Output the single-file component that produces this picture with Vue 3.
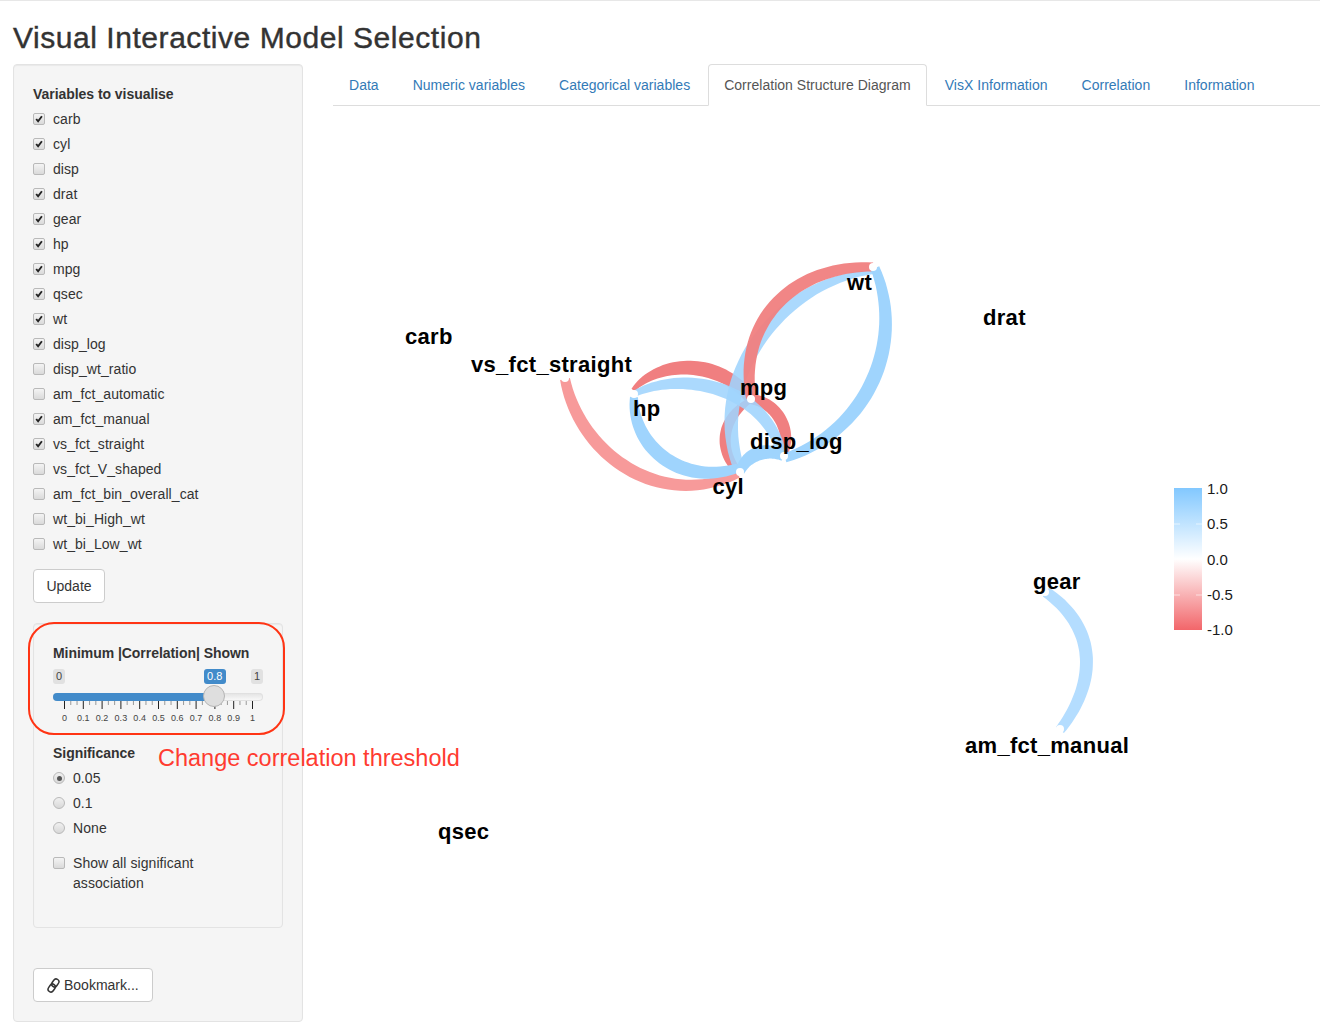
<template>
  <div class="page">
    <h2 class="title">Visual Interactive Model Selection</h2>
    <div class="row">
      <!-- sidebar -->
      <div class="well sidebar">
        <div class="group-label">Variables to visualise</div>
        <label v-for="v in variables" :key="v.name" class="check-row">
          <span class="box">
            <svg v-if="v.on" viewBox="0 0 12 12" width="12" height="12">
              <path d="M3.2 6l1.9 2.3 3.8-5" fill="none" stroke="#222" stroke-width="1.9" />
            </svg>
          </span>
          {{ v.name }}
        </label>
        <button class="btn update">Update</button>

        <div class="well inner">
          <div class="group-label">Minimum |Correlation| Shown</div>
          <div class="slider">
            <span class="tag tag-min">0</span>
            <span class="tag tag-val">0.8</span>
            <span class="tag tag-max">1</span>
            <div class="track"><div class="track-fill"></div></div>
            <svg class="ticks" width="210" height="30" viewBox="0 0 210 30">
              <line v-for="t in ticks" :key="t.x" :x1="t.x" :x2="t.x" y1="0" :y2="t.major ? 8 : 4" :stroke="t.major ? '#222' : '#999'" />
              <text v-for="(l, i) in tickLabels" :key="l" :x="11.5 + i * 18.8" y="20" class="tick-label">{{ l }}</text>
            </svg>
            <div class="handle"></div>
          </div>

          <div class="group-label">Significance</div>
          <label v-for="(r, i) in radios" :key="r" class="radio-row">
            <span class="dot" :class="{ on: i === 0 }"></span>
            {{ r }}
          </label>
          <label class="show-all">
            <span class="box"></span>
            <span>Show all significant association</span>
          </label>
        </div>

        <button class="btn bookmark">
          <svg viewBox="0 0 16 16" width="15" height="15">
            <g fill="none" stroke="#333" stroke-width="1.6" transform="rotate(-55 8 8)">
              <rect x="0.2" y="5" width="9" height="6" rx="3" />
              <rect x="6.8" y="5" width="9" height="6" rx="3" />
            </g>
          </svg>
          Bookmark...
        </button>
      </div>

      <!-- main panel -->
      <div class="main">
        <ul class="tabs">
          <li v-for="t in tabs" :key="t" class="tab" :class="{ active: t === activeTab }">{{ t }}</li>
        </ul>
        <svg class="plot" viewBox="333 106 987 921" width="987" height="921">
          <defs>
            <linearGradient id="legend" x1="0" y1="0" x2="0" y2="1">
              <stop offset="0" stop-color="#82c8ff" />
              <stop offset="0.5" stop-color="#ffffff" />
              <stop offset="1" stop-color="#f2666a" />
            </linearGradient>
          </defs>
          <path v-for="(e, i) in edges" :key="i" :d="ribbon(e)" :fill="e.color" :fill-opacity="e.alpha" />
          <circle v-for="n in nodes" :key="n[0] + '-' + n[1]" :cx="n[0]" :cy="n[1]" r="4" fill="#fff" />
          <text v-for="l in labels" :key="l.text" :x="l.x" :y="l.y" class="node-label">{{ l.text }}</text>
          <rect x="1174" y="488" width="28" height="142" fill="url(#legend)" />
          <g stroke="#fff" stroke-opacity="0.6">
            <line v-for="y in legendTicks" :key="'a' + y" x1="1174" x2="1180" :y1="y" :y2="y" />
            <line v-for="y in legendTicks" :key="'b' + y" x1="1196" x2="1202" :y1="y" :y2="y" />
          </g>
          <text v-for="l in legendLabels" :key="l.text" x="1207" :y="l.y" class="legend-label">{{ l.text }}</text>
        </svg>
      </div>
    </div>

    <!-- annotation drawn over the screenshot -->
    <div class="note-ring"></div>
    <div class="note-text">Change correlation threshold</div>
  </div>
</template>

<script setup>
const activeTab = 'Correlation Structure Diagram'
const tabs = ['Data', 'Numeric variables', 'Categorical variables', 'Correlation Structure Diagram', 'VisX Information', 'Correlation', 'Information']

const variables = [
  { name: 'carb', on: true }, { name: 'cyl', on: true }, { name: 'disp', on: false },
  { name: 'drat', on: true }, { name: 'gear', on: true }, { name: 'hp', on: true },
  { name: 'mpg', on: true }, { name: 'qsec', on: true }, { name: 'wt', on: true },
  { name: 'disp_log', on: true }, { name: 'disp_wt_ratio', on: false }, { name: 'am_fct_automatic', on: false },
  { name: 'am_fct_manual', on: true }, { name: 'vs_fct_straight', on: true }, { name: 'vs_fct_V_shaped', on: false },
  { name: 'am_fct_bin_overall_cat', on: false }, { name: 'wt_bi_High_wt', on: false }, { name: 'wt_bi_Low_wt', on: false }
]
const radios = ['0.05', '0.1', 'None']

const tickLabels = ['0', '0.1', '0.2', '0.3', '0.4', '0.5', '0.6', '0.7', '0.8', '0.9', '1']
const ticks = []
for (let i = 0; i <= 30; i++) {
  ticks.push({ x: 11.5 + i * 18.8 / 3, major: i % 3 === 0 })
}

const RED = '#f07f80'
const SALMON = '#f79a9a'
const BLUE = '#9fd4fd'
const PALE = '#b4ddff'

// each edge is a cubic bezier [p0, p1, p2, p3] with widths at start, middle and end
const edges = [
  { pts: [[565, 379], [580, 455], [660, 510], [738, 474]], w: [10, 13, 8], color: SALMON, alpha: 1 },
  { pts: [[751, 400], [725, 415], [715, 445], [738, 472]], w: [5, 11, 8], color: RED, alpha: 1 },
  { pts: [[633, 390], [660, 359], [720, 359], [750, 398]], w: [4, 14, 11], color: RED, alpha: 1 },
  { pts: [[751, 399], [780, 403], [792, 435], [783, 455]], w: [10, 12, 8], color: RED, alpha: 1 },
  { pts: [[634, 397], [632, 445], [680, 487], [738, 468]], w: [8, 14, 9], color: BLUE, alpha: 1 },
  { pts: [[873, 272], [780, 280], [705, 380], [740, 471]], w: [4, 14, 11], color: BLUE, alpha: 0.88 },
  { pts: [[634, 394], [680, 370], [765, 385], [782, 455]], w: [6, 13, 9], color: BLUE, alpha: 0.88 },
  { pts: [[751, 398], [738, 320], [795, 265], [873, 267]], w: [10, 13, 9], color: RED, alpha: 0.95 },
  { pts: [[875, 268], [905, 340], [870, 430], [785, 458]], w: [9, 14, 9], color: BLUE, alpha: 1 },
  { pts: [[740, 472], [747, 452], [770, 447], [784, 457]], w: [9, 14, 9], color: BLUE, alpha: 1 },
  { pts: [[1046, 592], [1100, 630], [1095, 685], [1060, 730]], w: [11, 13, 10], color: PALE, alpha: 1 }
]
const nodes = [[565, 378], [634, 394], [751, 399], [873, 267], [784, 456], [740, 472], [1045, 592], [1060, 729]]

const labels = [
  { text: 'carb', x: 405, y: 344 },
  { text: 'vs_fct_straight', x: 471, y: 372 },
  { text: 'wt', x: 847, y: 290 },
  { text: 'drat', x: 983, y: 325 },
  { text: 'mpg', x: 740, y: 395 },
  { text: 'hp', x: 633, y: 416 },
  { text: 'disp_log', x: 750, y: 449 },
  { text: 'cyl', x: 712.5, y: 494 },
  { text: 'gear', x: 1033, y: 589 },
  { text: 'am_fct_manual', x: 965, y: 753 },
  { text: 'qsec', x: 438, y: 839 }
]
const legendTicks = [524, 559, 595]
const legendLabels = [
  { text: '1.0', y: 494 }, { text: '0.5', y: 529 }, { text: '0.0', y: 565 },
  { text: '-0.5', y: 600 }, { text: '-1.0', y: 635 }
]

// samples the bezier and returns a closed ribbon whose width follows w
function ribbon({ pts, w }) {
  const [a, b, c, d] = pts
  const left = []
  const right = []
  for (let i = 0; i <= 40; i++) {
    const t = i / 40
    const u = 1 - t
    const pos = k => u * u * u * a[k] + 3 * u * u * t * b[k] + 3 * u * t * t * c[k] + t * t * t * d[k]
    const der = k => 3 * u * u * (b[k] - a[k]) + 6 * u * t * (c[k] - b[k]) + 3 * t * t * (d[k] - c[k])
    const len = Math.hypot(der(0), der(1)) || 1
    const half = (u * u * w[0] + 2 * u * t * (2 * w[1] - (w[0] + w[2]) / 2) + t * t * w[2]) / 2
    const nx = -der(1) / len
    const ny = der(0) / len
    left.push((pos(0) + nx * half).toFixed(1) + ' ' + (pos(1) + ny * half).toFixed(1))
    right.unshift((pos(0) - nx * half).toFixed(1) + ' ' + (pos(1) - ny * half).toFixed(1))
  }
  return 'M' + left.join('L') + 'L' + right.join('L') + 'Z'
}
</script>

<style>
html, body { background: #fff; }
</style>

<style scoped>
.page {
  position: relative;
  height: 1027px;
  overflow: hidden;
  box-sizing: border-box;
  border-top: 1px solid #e7e7e7;
  padding: 0 0 0 13px;
  font-family: "Liberation Sans", Arial, sans-serif;
  font-size: 14px;
  line-height: 20px;
  color: #333;
}
.title {
  margin: 20px 0 10px;
  font-size: 30px;
  line-height: 33px;
  font-weight: 400;
  letter-spacing: 0.55px;
  -webkit-text-stroke: 0.4px #333;
  color: #333;
}
.row { display: flex; gap: 30px; align-items: flex-start; }
.well {
  box-sizing: border-box;
  background: #f5f5f5;
  border: 1px solid #e3e3e3;
  border-radius: 4px;
  box-shadow: inset 0 1px 1px rgba(0, 0, 0, 0.05);
}
.sidebar {
  width: 290px;
  height: 958px;
  flex: none;
  padding: 19px;
  letter-spacing: 0.07px;
}
.group-label { font-weight: 700; margin-bottom: 5px; letter-spacing: -0.05px; }
.check-row {
  display: flex;
  align-items: center;
  height: 20px;
  margin-bottom: 5px;
}
.box {
  display: block;
  box-sizing: border-box;
  flex: none;
  width: 12px;
  height: 12px;
  margin-right: 8px;
  border: 1px solid #b9b9b9;
  border-radius: 2px;
  background: linear-gradient(#f4f4f4, #dadada);
  position: relative;
}
.box svg { position: absolute; left: -1px; top: -1px; }
.btn {
  display: block;
  box-sizing: border-box;
  height: 34px;
  padding: 6px 12px;
  font: inherit;
  color: #333;
  background: #fff;
  border: 1px solid #ccc;
  border-radius: 4px;
}
.update { width: 72px; margin-top: 15px; }
.inner {
  width: 250px;
  height: 305px;
  margin-top: 20px;
  padding: 19px;
}
.inner > .group-label:first-child { margin-bottom: 6px; }
.slider { position: relative; height: 74px; }
.tag {
  position: absolute;
  top: 0;
  height: 15px;
  padding: 0 3px;
  font-size: 11px;
  line-height: 15px;
  border-radius: 3px;
  background: #e1e1e1;
  color: #444;
}
.tag-min { left: 0; }
.tag-val { left: 151px; background: #428bca; color: #fff; }
.tag-max { left: 198px; }
.track {
  position: absolute;
  left: 0;
  top: 24px;
  width: 210px;
  height: 8px;
  border-radius: 4px;
  background: linear-gradient(#e2e2e2, #fbfbfb);
  box-shadow: inset 0 0 0 1px #e0e0e0;
  overflow: hidden;
}
.track-fill { width: 161px; height: 8px; background: #428bca; }
.handle {
  position: absolute;
  left: 150px;
  top: 16px;
  width: 22px;
  height: 22px;
  box-sizing: border-box;
  border-radius: 50%;
  border: 1px solid #b5b5b5;
  background: #dedede;
}
.ticks { position: absolute; left: 0; top: 32px; }
.tick-label {
  font-size: 9px;
  fill: #444;
  text-anchor: middle;
}
.radio-row {
  display: flex;
  align-items: center;
  height: 20px;
  margin-bottom: 5px;
}
.dot {
  box-sizing: border-box;
  flex: none;
  width: 12px;
  height: 12px;
  margin-right: 8px;
  border-radius: 50%;
  border: 1px solid #b9b9b9;
  background: linear-gradient(#f0f0f0, #d8d8d8);
  position: relative;
}
.dot.on::after {
  content: "";
  position: absolute;
  left: 2.5px;
  top: 2.5px;
  width: 5px;
  height: 5px;
  border-radius: 50%;
  background: #555;
}
.show-all {
  display: flex;
  align-items: flex-start;
  margin-top: 15px;
}
.show-all .box { margin-top: 4px; }
.bookmark {
  display: flex;
  align-items: center;
  gap: 3px;
  width: 120px;
  margin-top: 40px;
  padding: 6px 12px;
}
.main { flex: 1; min-width: 0; }
.tabs {
  display: flex;
  margin: 0;
  padding: 0;
  list-style: none;
  height: 42px;
  box-sizing: border-box;
  border-bottom: 1px solid #ddd;
}
.tab {
  height: 42px;
  box-sizing: border-box;
  padding: 10px 15px;
  margin-right: 2px;
  letter-spacing: 0.02px;
  color: #337ab7;
  white-space: nowrap;
  border: 1px solid transparent;
  border-radius: 4px 4px 0 0;
}
.tab.active {
  color: #555;
  background: #fff;
  border-color: #ddd #ddd #fff;
}
.plot { display: block; }
.node-label {
  font-size: 22px;
  font-weight: 700;
  letter-spacing: 0.3px;
  fill: #000;
}
.legend-label { font-size: 15px; fill: #1a1a1a; }
.note-ring {
  position: absolute;
  left: 28px;
  top: 621px;
  width: 257px;
  height: 113px;
  box-sizing: border-box;
  border: 2.5px solid #ff3414;
  border-radius: 26px;
}
.note-text {
  position: absolute;
  left: 158px;
  top: 743px;
  font-size: 23.5px;
  line-height: 28px;
  color: #ff3b30;
  white-space: nowrap;
}
</style>
